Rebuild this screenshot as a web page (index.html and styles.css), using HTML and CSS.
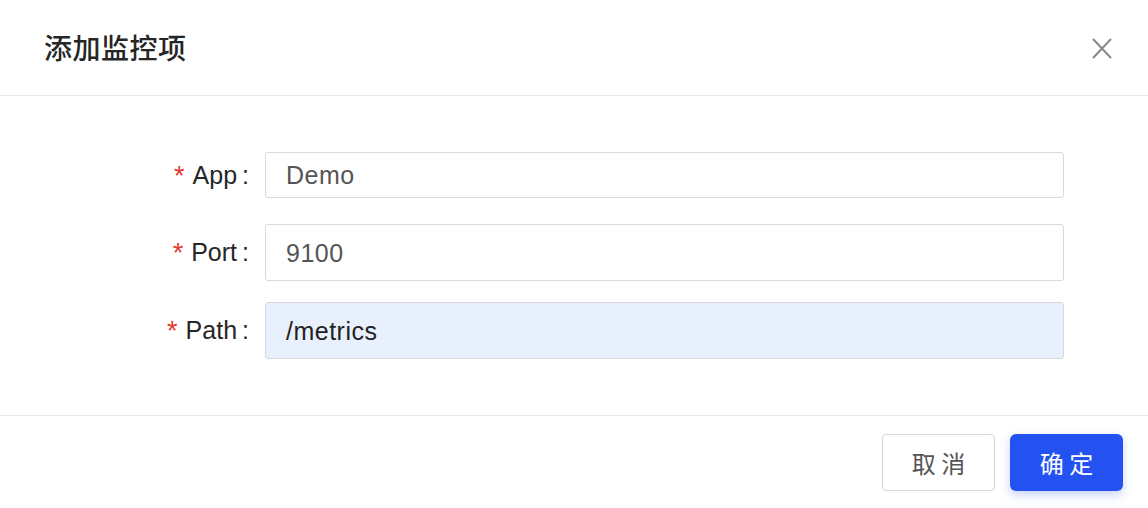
FILE: index.html
```html
<!DOCTYPE html>
<html lang="zh">
<head>
<meta charset="utf-8">
<link rel="stylesheet" href="styles.css">
</head>
<body>
<div class="dialog">
  <div class="header">
    <div class="title">添加监控项</div>
    <button class="close" aria-label="关闭">
      <svg width="20" height="21" viewBox="0 0 20 21"><path d="M1 1L19 20M19 1L1 20" stroke="#888" stroke-width="2" fill="none"/></svg>
    </button>
  </div>
  <div class="body">
    <div class="row row-app">
      <label class="label"><span class="req">*</span>App<span class="colon">:</span></label>
      <div class="input input-app">Demo</div>
    </div>
    <div class="row row-port">
      <label class="label"><span class="req">*</span>Port<span class="colon">:</span></label>
      <div class="input input-port">9100</div>
    </div>
    <div class="row row-path">
      <label class="label"><span class="req">*</span>Path<span class="colon">:</span></label>
      <div class="input input-path">/metrics</div>
    </div>
  </div>
  <div class="footer">
    <button class="btn btn-cancel">取 消</button>
    <button class="btn btn-ok">确 定</button>
  </div>
</div>
</body>
</html>
```
FILE: styles.css
```css
* { box-sizing: border-box; }
html, body { margin: 0; padding: 0; background: #fff; }
body {
  font-family: "Liberation Sans", "Noto Sans CJK SC", sans-serif;
  color: #222;
  width: 1148px;
  height: 508px;
  overflow: hidden;
}
.dialog { width: 1148px; }
.header {
  height: 96px;
  border-bottom: 1px solid #e8e8e8;
  display: flex;
  align-items: center;
  justify-content: space-between;
  padding: 0 36px 0 44px;
}
.title {
  font-family: "Noto Sans CJK SC", sans-serif;
  font-size: 28px;
  font-weight: 500;
  color: #262626;
  letter-spacing: 0.5px;
  margin-top: -2px;
}
.close {
  border: 0;
  background: none;
  padding: 0;
  width: 20px;
  height: 21px;
  display: flex;
  margin-top: 1px;
}
.body {
  height: 320px;
  border-bottom: 1px solid #e8e8e8;
  padding: 56px 84px 0 0;
}
.row {
  display: grid;
  grid-template-columns: 265px 1fr;
  align-items: center;
}
.row-app { margin-bottom: 26px; }
.row-port { margin-bottom: 21px; }
.label {
  text-align: right;
  padding-right: 16px;
  font-size: 25px;
  color: #262626;
}
.req {
  color: #e53935;
  margin-right: 8px;
  font-size: 27px;
  position: relative;
  top: 1px;
}
.colon { margin-left: 5px; }
.input {
  border: 1px solid #d9d9d9;
  border-radius: 3px;
  padding-left: 20px;
  padding-top: 1px;
  font-size: 25px;
  letter-spacing: 0.5px;
  display: flex;
  align-items: center;
  color: #555;
}
.input-app { height: 46px; }
.input-port { height: 57px; }
.input-path { height: 57px; background: #e8f0fd; color: #222; }
.footer {
  display: flex;
  justify-content: flex-end;
  padding: 18px 25px 0 0;
  gap: 15px;
}
.btn {
  width: 113px;
  height: 57px;
  border-radius: 4px;
  font-family: "Noto Sans CJK SC", sans-serif;
  font-size: 24px;
  padding: 0;
}
.btn-cancel {
  background: #fff;
  border: 1px solid #d6d6d6;
  color: #555;
}
.btn-ok {
  background: #2352f1;
  border: 0;
  color: #fff;
  border-radius: 6px;
  box-shadow: 0 4px 10px rgba(35, 82, 241, 0.25);
}
```
